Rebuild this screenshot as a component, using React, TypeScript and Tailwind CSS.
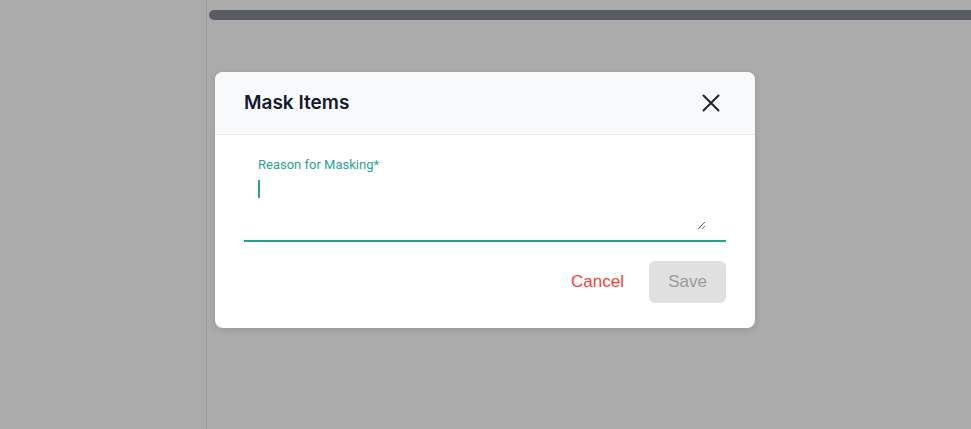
export default function App() {
  return (
    <div className="relative flex h-[429px] w-[971px] overflow-hidden bg-[#ababab] font-['Inter',sans-serif]">
      {/* sidebar edge */}
      <div className="w-[207px] shrink-0 border-r border-[#9c9c9c]" />
      <div className="flex-1 pt-[10px] pl-[2px]">
        <div className="h-[10px] rounded-l-full bg-[#595c63]" />
      </div>

      {/* modal */}
      <div className="absolute left-[215px] top-[72px] w-[540px] overflow-hidden rounded-lg bg-white shadow-[0_2px_6px_rgba(0,0,0,0.12)]">
        <div className="flex h-[63px] items-center justify-between border-b border-[#e6e8ee] bg-[#f8f9fb] pl-[29px] pr-[32px]">
          <h2 className="text-[19px] font-semibold text-[#141a2e]">Mask Items</h2>
          <button className="flex h-6 w-6 items-center justify-center text-[#222]">
            <svg width="18" height="18" viewBox="0 0 18 18" fill="none" stroke="currentColor" strokeWidth="2" strokeLinecap="round">
              <path d="M1.5 1.5 16.5 16.5M16.5 1.5 1.5 16.5" />
            </svg>
          </button>
        </div>

        <div className="px-[29px] pb-[25px] pt-[22px]">
          <div className="border-b-2 border-[#26a08f] pb-[10px] pl-[14px] pr-[20px]">
            <label className="block font-['Roboto',sans-serif] text-[13px] leading-4 text-[#2aa493]">Reason for Masking*</label>
            <div className="relative mt-[5px]">
              <span className="absolute left-0 top-[2px] h-[18px] w-[2px] bg-[#26a08f]" />
              <textarea className="block h-[52px] w-full resize-y bg-transparent text-[14px] outline-none" />
            </div>
          </div>

          <div className="mt-[19px] flex items-center justify-end gap-[25px] font-['Liberation_Sans',Arial,sans-serif]">
            <button className="text-[17px] text-[#f44336]">Cancel</button>
            <button className="h-[42px] w-[77px] rounded-md bg-[#e0e0e0] text-[17px] text-[#9a9a9a]">Save</button>
          </div>
        </div>
      </div>
    </div>
  );
}
